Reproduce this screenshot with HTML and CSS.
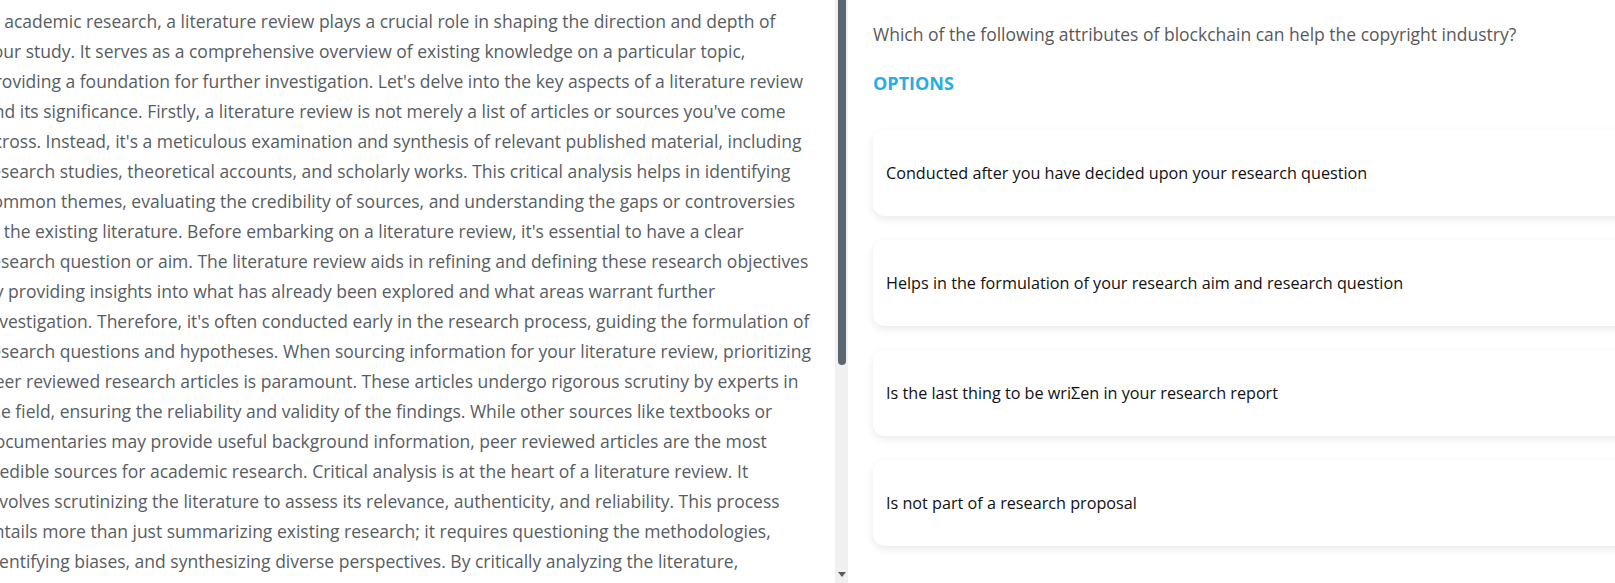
FILE: index.html
```html
<!DOCTYPE html>
<html lang="en">
<head>
<meta charset="utf-8">
<title>Literature review quiz</title>
<link rel="stylesheet" href="styles.css">
</head>
<body>
<div class="page">
  <section class="reading">
    <p class="passage">In academic research, a literature review plays a crucial role in shaping the direction and depth of<br>
your study. It serves as a comprehensive overview of existing knowledge on a particular topic,<br>
providing a foundation for further investigation. Let's delve into the key aspects of a literature review<br>
and its significance. Firstly, a literature review is not merely a list of articles or sources you've come<br>
across. Instead, it's a meticulous examination and synthesis of relevant published material, including<br>
research studies, theoretical accounts, and scholarly works. This critical analysis helps in identifying<br>
common themes, evaluating the credibility of sources, and understanding the gaps or controversies<br>
in the existing literature. Before embarking on a literature review, it's essential to have a clear<br>
research question or aim. The literature review aids in refining and defining these research objectives<br>
by providing insights into what has already been explored and what areas warrant further<br>
investigation. Therefore, it's often conducted early in the research process, guiding the formulation of<br>
research questions and hypotheses. When sourcing information for your literature review, prioritizing<br>
peer reviewed research articles is paramount. These articles undergo rigorous scrutiny by experts in<br>
the field, ensuring the reliability and validity of the findings. While other sources like textbooks or<br>
documentaries may provide useful background information, peer reviewed articles are the most<br>
credible sources for academic research. Critical analysis is at the heart of a literature review. It<br>
involves scrutinizing the literature to assess its relevance, authenticity, and reliability. This process<br>
entails more than just summarizing existing research; it requires questioning the methodologies,<br>
identifying biases, and synthesizing diverse perspectives. By critically analyzing the literature,<br>
researchers can build a stronger argument for their own work.</p>
  </section>
  <div class="scrollbar">
    <div class="scrollbar-thumb"></div>
    <div class="scrollbar-space"></div>
    <div class="scrollbar-arrow"></div>
  </div>
  <section class="quiz">
    <p class="question">Which of the following attributes of blockchain can help the copyright industry?</p>
    <h2 class="options-title">OPTIONS</h2>
    <ul class="options">
      <li class="option">Conducted after you have decided upon your research question</li>
      <li class="option">Helps in the formulation of your research aim and research question</li>
      <li class="option">Is the last thing to be wriΣen in your research report</li>
      <li class="option">Is not part of a research proposal</li>
    </ul>
  </section>
</div>
</body>
</html>
```

FILE: styles.css
```css
html, body {
  margin: 0;
  padding: 0;
  background: #ffffff;
}

body {
  font-family: "Open Sans", "Noto Sans", sans-serif;
  overflow: hidden;
}

.page {
  display: flex;
  height: 583px;
  overflow: hidden;
}

.reading {
  flex: none;
  width: 835px;
  overflow: hidden;
}

.passage {
  margin: 6px 0 0 -16px;
  font-size: 17.5px;
  line-height: 30px;
  color: #575d63;
  white-space: nowrap;
}

.scrollbar {
  flex: none;
  width: 13px;
  background: #f0f0f0;
  display: flex;
  flex-direction: column;
  align-items: center;
}

.scrollbar-thumb {
  width: 8px;
  height: 365px;
  background: #5b6770;
  border-radius: 0 0 4px 4px;
}

.scrollbar-space {
  flex: 1;
}

.scrollbar-arrow {
  width: 0;
  height: 0;
  border-left: 4px solid transparent;
  border-right: 4px solid transparent;
  border-top: 5px solid #5a5a5a;
  margin: 0 0 6px 1px;
}

.quiz {
  flex: 1;
  min-width: 0;
  padding: 19px 0 0 25px;
  overflow: hidden;
}

.question {
  margin: 0;
  font-size: 17.5px;
  line-height: 30px;
  color: #595959;
  white-space: nowrap;
}

.options-title {
  margin: 22px 0 0;
  font-size: 18px;
  line-height: 24px;
  font-weight: 700;
  color: #27aee0;
}

.options {
  list-style: none;
  margin: 35px -30px 0 0;
  padding: 0;
  display: flex;
  flex-direction: column;
  gap: 24px;
}

.option {
  height: 86px;
  display: flex;
  align-items: center;
  padding: 0 13px;
  border-radius: 12px;
  background: #ffffff;
  box-shadow: 0 3px 9px rgba(0, 0, 0, 0.09);
  font-size: 16.2px;
  color: #111111;
}
```
